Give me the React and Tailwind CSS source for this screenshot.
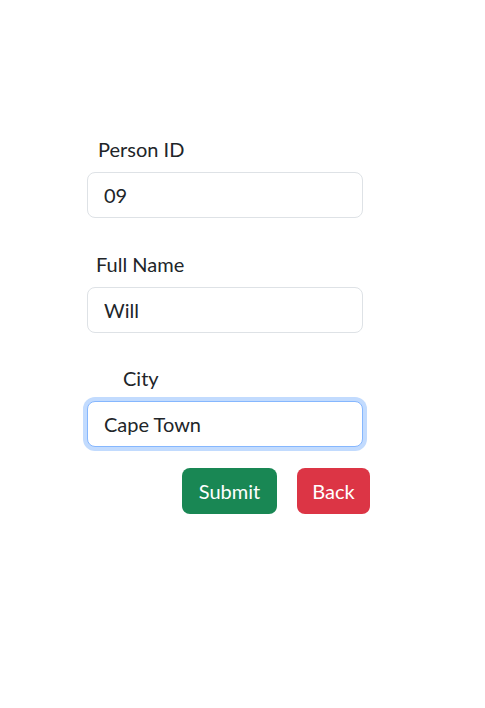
import React, { useState } from 'react';

const Field = ({ label, labelClass, value, onChange, focused, className = '' }) => (
  <div className={className}>
    <label className={`block h-[30px] leading-[30px] text-[20px] mb-2 ${labelClass}`}>{label}</label>
    <input
      type="text"
      value={value}
      onChange={onChange}
      className={`block w-[276px] h-[46px] px-4 rounded-lg border bg-white text-[20px] text-[#212529] outline-none ${
        focused
          ? 'border-[#86b7fe] shadow-[0_0_0_4px_rgba(13,110,253,0.25)]'
          : 'border-[#dee2e6]'
      }`}
    />
  </div>
);

const App = () => {
  const [form, setForm] = useState({ id: '09', name: 'Will', city: 'Cape Town' });

  const set = (key) => (e) => setForm((prev) => ({ ...prev, [key]: e.target.value }));

  return (
    <div className="min-h-[708px] bg-white text-[#212529] font-['Lato','Liberation_Sans',sans-serif] pt-[134px] pl-[87px]">
      <form className="flex flex-col" onSubmit={(e) => e.preventDefault()}>
        <Field label="Person ID" labelClass="ml-[11px]" value={form.id} onChange={set('id')} />
        <Field label="Full Name" labelClass="ml-[9px]" className="mt-[31px]" value={form.name} onChange={set('name')} />
        <Field label="City" labelClass="ml-[36px]" className="mt-[30px]" value={form.city} onChange={set('city')} focused />
      </form>

      <div className="flex gap-5 mt-[21px] ml-[95px]">
        <button
          type="submit"
          className="w-[95px] h-[46px] rounded-lg bg-[#198754] text-white text-[20px]"
        >
          Submit
        </button>
        <button
          type="button"
          className="w-[73px] h-[46px] rounded-lg bg-[#dc3545] text-white text-[20px]"
        >
          Back
        </button>
      </div>
    </div>
  );
};

export default App;
